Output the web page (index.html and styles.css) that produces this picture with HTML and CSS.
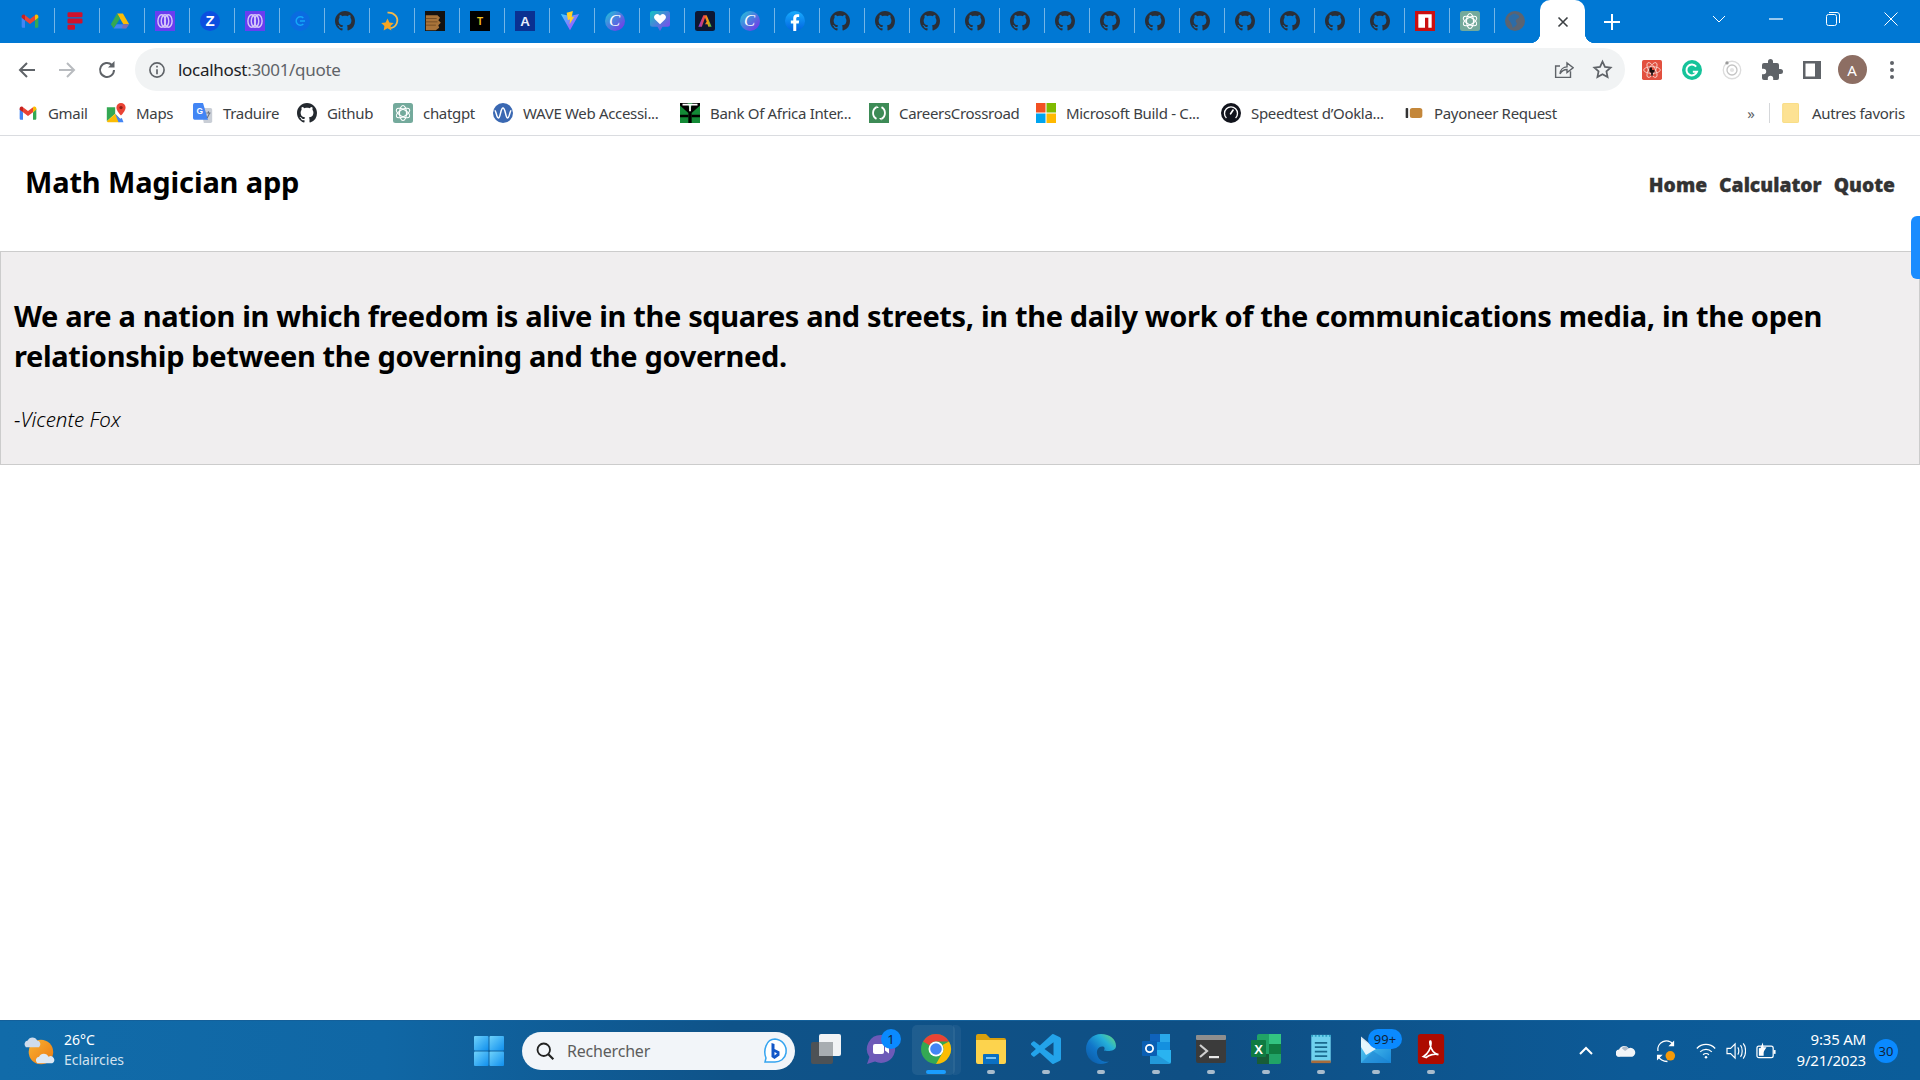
FILE: index.html
```html
<!DOCTYPE html>
<html lang="en">
<head>
<meta charset="utf-8">
<title>Math Magician app</title>
<link rel="stylesheet" href="styles.css">
</head>
<body>
<svg class="defs" aria-hidden="true">
  <defs>
    <linearGradient id="gCanva" x1="0" y1="0" x2="1" y2="1"><stop offset="0" stop-color="#1fc8d8"/><stop offset="1" stop-color="#7d2ae8"/></linearGradient>
    <linearGradient id="gHeart" x1="0" y1="0" x2="1" y2="1"><stop offset="0" stop-color="#10c4c4"/><stop offset="1" stop-color="#8a3df0"/></linearGradient>
    <linearGradient id="gVite" x1="0" y1="0" x2="1" y2="1"><stop offset="0" stop-color="#41d1ff"/><stop offset="1" stop-color="#bd34fe"/></linearGradient>
    <linearGradient id="gFb" x1="0" y1="0" x2="0" y2="1"><stop offset="0" stop-color="#18acfe"/><stop offset="1" stop-color="#0163e0"/></linearGradient>
    <linearGradient id="gAdobe" x1="0" y1="0" x2="1" y2="0"><stop offset="0" stop-color="#7c3aed"/><stop offset=".4" stop-color="#ef4444"/><stop offset=".7" stop-color="#f59e0b"/><stop offset="1" stop-color="#22c55e"/></linearGradient>
    <linearGradient id="gEdge" x1="1" y1="0" x2="0" y2="1"><stop offset="0" stop-color="#6fdc6a"/><stop offset=".3" stop-color="#25b0d8"/><stop offset=".6" stop-color="#1176c9"/><stop offset="1" stop-color="#0b57a0"/></linearGradient>
    <linearGradient id="gSun" x1="0" y1="0" x2="1" y2="1"><stop offset="0" stop-color="#f9b233"/><stop offset="1" stop-color="#ec7a12"/></linearGradient>
    <linearGradient id="gWin" x1="0" y1="0" x2="1" y2="1"><stop offset="0" stop-color="#6fd2fb"/><stop offset="1" stop-color="#0f8fee"/></linearGradient>
    <linearGradient id="gMail" x1="0" y1="0" x2="1" y2="1"><stop offset="0" stop-color="#5fd3f5"/><stop offset="1" stop-color="#1687d9"/></linearGradient>

    <symbol id="i-gmail" viewBox="0 0 24 24">
      <path fill="#4285f4" d="M2 7v11.5C2 19.3 2.7 20 3.5 20H6v-9z"/>
      <path fill="#34a853" d="M22 7v11.5c0 .8-.7 1.5-1.5 1.5H18v-9z"/>
      <path fill="#ea4335" d="M6 11l6 4.5 6-4.5V5l-6 4.5L6 5z"/>
      <path fill="#fbbc04" d="M18 5v6l4-3V6.500c0-1.900-2.200-3-3.700-1.800z"/>
      <path fill="#c5221f" d="M6 5v6L2 8V6.500c0-1.900 2.200-3 3.700-1.800z"/>
    </symbol>
    <symbol id="i-flip" viewBox="0 0 24 24">
      <rect x="3" y="1.500" width="18" height="6" rx="1.500" fill="#d0112b"/>
      <rect x="3" y="9" width="18" height="6" rx="1.500" fill="#d0112b"/>
      <rect x="3" y="16.500" width="9" height="6" rx="1.500" fill="#d0112b"/>
    </symbol>
    <symbol id="i-drive" viewBox="0 0 24 24">
      <path fill="#fbbc04" d="M8.500 3h7l7.500 13h-7z"/>
      <path fill="#34a853" d="M8.500 3 1 16l3.500 5 7.500-12z"/>
      <path fill="#4285f4" d="M4.500 21h15l3.500-5H8z"/>
      <path fill="#ea4335" d="M19.500 21 23 16h-7.500l-1 5z" opacity=".35"/>
    </symbol>
    <symbol id="i-loops" viewBox="0 0 24 24">
      <rect width="24" height="24" fill="#6a3df0"/>
      <g fill="none" stroke="#e3d8fb" stroke-width="1.700" opacity=".9">
        <ellipse cx="8" cy="12" rx="4.500" ry="7.500"/><ellipse cx="12" cy="12" rx="4.500" ry="7.500"/><ellipse cx="16" cy="12" rx="4.500" ry="7.500"/>
      </g>
    </symbol>
    <symbol id="i-z" viewBox="0 0 24 24">
      <circle cx="12" cy="12" r="12" fill="#0b4fe0"/>
      <text x="12" y="18.500" text-anchor="middle" class="svg-bold" font-size="18" fill="#fff">Z</text>
    </symbol>
    <symbol id="i-cc" viewBox="0 0 24 24">
      <circle cx="12" cy="12" r="12" fill="#0a6be0"/>
      <path fill="none" stroke="#14a8f8" stroke-width="1.800" d="M16 8.500a5 5 0 1 0 0 7M12 12h6"/>
    </symbol>
    <symbol id="i-github" viewBox="0 0 16 16">
      <path fill="currentColor" fill-rule="evenodd" d="M8 0C3.580 0 0 3.580 0 8c0 3.540 2.290 6.530 5.470 7.590.4.070.55-.17.55-.38 0-.19-.01-.82-.01-1.490-2.010.37-2.530-.49-2.690-.94-.09-.23-.48-.94-.82-1.130-.28-.15-.68-.52-.01-.53.63-.01 1.080.58 1.230.82.72 1.210 1.870.87 2.330.66.070-.52.28-.87.51-1.070-1.780-.2-3.640-.89-3.640-3.950 0-.87.31-1.590.82-2.150-.08-.2-.36-1.020.08-2.120 0 0 .67-.21 2.200.82.64-.18 1.320-.27 2-.27.68 0 1.360.09 2 .27 1.530-1.040 2.200-.82 2.200-.82.44 1.100.16 1.920.08 2.120.51.56.82 1.280.82 2.150 0 3.070-1.870 3.750-3.650 3.950.29.25.54.73.54 1.480 0 1.070-.01 1.930-.01 2.200 0 .21.15.46.55.38A8.013 8.013 0 0 0 16 8c0-4.420-3.580-8-8-8z"/>
    </symbol>
    <symbol id="i-star-swoosh" viewBox="0 0 24 24">
      <path fill="none" stroke="#f2b84b" stroke-width="2.200" d="M9 2c8-1 14 6 11 13-1.500 3.500-5 5.500-8 5.500"/>
      <path fill="#f5a623" d="M9 9l2.300 4.700 5.200.8-3.800 3.600.9 5.200L9 20.800l-4.600 2.500.9-5.200L1.500 14.500l5.200-.8z"/>
    </symbol>
    <symbol id="i-brown" viewBox="0 0 24 24">
      <rect width="24" height="24" fill="#141210"/>
      <path fill="#a9743a" d="M1 5h14l3 3-2 3 3 3-3 3 1 3-4 3H1z"/>
      <path stroke="#6e4820" stroke-width="1" d="M1 9h13M1 13h14M1 17h12"/>
    </symbol>
    <symbol id="i-t" viewBox="0 0 24 24">
      <rect width="24" height="24" fill="#000"/>
      <text x="12" y="17" text-anchor="middle" class="svg-bold" font-size="12" fill="#f0c020">T</text>
    </symbol>
    <symbol id="i-a" viewBox="0 0 24 24">
      <rect width="24" height="24" fill="#0a3191"/>
      <text x="12" y="18" text-anchor="middle" class="svg-bold" font-size="16" fill="#e8eefc">A</text>
    </symbol>
    <symbol id="i-vite" viewBox="0 0 24 24">
      <path fill="url(#gVite)" d="M1 3.500 12 23 23 3.500 16 5l-4 1-4-1z"/>
      <path fill="#ffd028" d="M15.500 0 8 2l1.500 9 2.500-1-.5 6 5.500-9-3 .5z"/>
    </symbol>
    <symbol id="i-canva" viewBox="0 0 24 24">
      <circle cx="12" cy="12" r="12" fill="url(#gCanva)"/>
      <text x="11.500" y="18.500" text-anchor="middle" class="svg-serif" font-size="20" fill="#fff">C</text>
    </symbol>
    <symbol id="i-heart" viewBox="0 0 24 24">
      <path fill="url(#gHeart)" d="M3 0h18a3 3 0 0 1 3 3v13a3 3 0 0 1-3 3h-6l-3 5-3-5H3a3 3 0 0 1-3-3V3a3 3 0 0 1 3-3z"/>
      <path fill="#fff" d="M12 16 5.800 9.800a3.700 3.700 0 0 1 5.200-5.200l1 1 1-1a3.700 3.700 0 0 1 5.200 5.200z"/>
    </symbol>
    <symbol id="i-adobe" viewBox="0 0 24 24">
      <rect width="24" height="24" rx="3" fill="#0d1733"/>
      <path fill="url(#gAdobe)" d="M10 5h4l6 14h-4l-1-3h-3l2-3.500-2-4.500-3.800 11H4z"/>
    </symbol>
    <symbol id="i-fb" viewBox="0 0 24 24">
      <circle cx="12" cy="12" r="12" fill="url(#gFb)"/>
      <path fill="#fff" d="M13.500 24v-9h3l.5-3.700h-3.500V9c0-1 .4-1.800 1.900-1.800H17V4c-.5-.1-1.500-.2-2.500-.2-2.700 0-4.600 1.600-4.600 4.700v2.800H7V15h2.900v9z"/>
    </symbol>
    <symbol id="i-npm" viewBox="0 0 24 24">
      <rect width="24" height="24" fill="#cb0f0f"/>
      <path fill="#fff" d="M4 4h16v16h-4V8h-4v12H4z"/>
    </symbol>
    <symbol id="i-gpt" viewBox="0 0 24 24">
      <rect width="24" height="24" rx="3" fill="#74aa9c"/>
      <g fill="none" stroke="#fff" stroke-width="1.300">
        <ellipse cx="12" cy="12" rx="4.200" ry="9"/>
        <ellipse cx="12" cy="12" rx="4.200" ry="9" transform="rotate(60 12 12)"/>
        <ellipse cx="12" cy="12" rx="4.200" ry="9" transform="rotate(120 12 12)"/>
      </g>
    </symbol>
    <symbol id="i-globe" viewBox="0 0 24 24">
      <circle cx="12" cy="12" r="12" fill="#5a6472"/>
      <path fill="#1f6fb8" d="M12 3c2 1 5 2 5 4s-3 2-4 4 2 3 1 5-3 4-5 4c0-3-1-4-2-6s-3-3-3-5 5-6 8-6z" opacity=".75"/>
    </symbol>

    <symbol id="i-maps" viewBox="0 0 24 24">
      <path fill="#34a853" d="M1 5l10 0v8L1 22z"/>
      <path fill="#fbbc04" d="M1 22 11 13l6 6-1 4H2z"/>
      <path fill="#4285f4" d="M11 13l6 6 2-1 2 5h-6z"/>
      <path fill="#ea4335" d="M18 0a5.500 5.500 0 0 0-5.500 5.500C12.500 10 18 15 18 15s5.500-5 5.500-9.500A5.500 5.500 0 0 0 18 0z"/>
      <circle cx="18" cy="5.500" r="2" fill="#8e1f16"/>
    </symbol>
    <symbol id="i-translate" viewBox="0 0 24 24">
      <path fill="#c9ced6" d="M9 6h12a2 2 0 0 1 2 2v14a2 2 0 0 1-2 2h-8z"/>
      <path fill="#4285f4" d="M2 0h10l6 20H2a2 2 0 0 1-2-2V2a2 2 0 0 1 2-2z"/>
      <text x="8" y="13" text-anchor="middle" class="svg-bold" font-size="10" fill="#fff">G</text>
      <path stroke="#6b7280" stroke-width="1.300" d="M16 12h5M18.500 10v2M17 18l3-6"/>
    </symbol>
    <symbol id="i-wave" viewBox="0 0 24 24">
      <circle cx="12" cy="12" r="12" fill="#3a68b2"/>
      <path fill="none" stroke="#fff" stroke-width="1.800" d="M2 9c2 0 2 9 4.500 9S9 6 12 6s3 12 5.500 12S20 9 22 9"/>
    </symbol>
    <symbol id="i-bank" viewBox="0 0 24 24">
      <rect width="24" height="24" fill="#138a36"/>
      <path fill="#000" d="M0 0h9l3 9 3-9h9v3l-10 9v12h-4V12L0 3z"/>
      <path fill="#000" d="M0 14h10v3H0zM14 14h10v3H14z"/>
      <path fill="#fff" d="M3 1h18v2h-8v7h-2V3H3z"/>
    </symbol>
    <symbol id="i-careers" viewBox="0 0 24 24">
      <rect width="24" height="24" fill="#3d8b56"/>
      <path fill="none" stroke="#fff" stroke-width="2.200" d="M9 5a8 8 0 0 0 0 14M15 5a8 8 0 0 1 0 14"/>
      <path fill="#fff" d="M9 3l3 3H9zM15 21l-3-3h3z"/>
    </symbol>
    <symbol id="i-ms" viewBox="0 0 24 24">
      <rect width="11.400" height="11.400" fill="#f25022"/>
      <rect x="12.600" width="11.400" height="11.400" fill="#7fba00"/>
      <rect y="12.600" width="11.400" height="11.400" fill="#00a4ef"/>
      <rect x="12.600" y="12.600" width="11.400" height="11.400" fill="#ffb900"/>
    </symbol>
    <symbol id="i-speed" viewBox="0 0 24 24">
      <circle cx="12" cy="12" r="12" fill="#11131c"/>
      <path fill="none" stroke="#fff" stroke-width="1.600" d="M6.500 18a7.800 7.800 0 1 1 11 0"/>
      <path stroke="#fff" stroke-width="2" stroke-linecap="round" d="M11.500 13l3-4.500"/>
    </symbol>
    <symbol id="i-payoneer" viewBox="0 0 24 24">
      <rect x="2" y="6" width="3" height="12" rx="1" fill="#333"/>
      <rect x="7" y="6" width="15" height="12" rx="3" fill="#c4873a"/>
    </symbol>
    <symbol id="i-folder" viewBox="0 0 24 24">
      <path fill="#fde293" stroke="#f7d774" d="M3 .500h17a1 1 0 0 1 1 1v21a1 1 0 0 1-1 1H3a1 1 0 0 1-1-1v-21a1 1 0 0 1 1-1z"/>
    </symbol>

    <symbol id="i-back" viewBox="0 0 24 24"><path fill="none" stroke="currentColor" stroke-width="2" d="M20 12H5M12 5l-7 7 7 7"/></symbol>
    <symbol id="i-forward" viewBox="0 0 24 24"><path fill="none" stroke="currentColor" stroke-width="2" d="M4 12h15M12 5l7 7-7 7"/></symbol>
    <symbol id="i-reload" viewBox="0 0 24 24"><path fill="none" stroke="currentColor" stroke-width="2" d="M19 12a7 7 0 1 1-2.100-5"/><path fill="currentColor" d="M19.500 3v6.500H13z"/></symbol>
    <symbol id="i-info" viewBox="0 0 24 24"><circle cx="12" cy="12" r="8.500" fill="none" stroke="currentColor" stroke-width="2"/><path fill="currentColor" d="M11 11h2v6h-2zM11 7h2v2h-2z"/></symbol>
    <symbol id="i-share" viewBox="0 0 24 24"><path fill="none" stroke="currentColor" stroke-width="1.600" d="M20 14v7H3V8h5"/><path fill="none" stroke="currentColor" stroke-width="1.600" d="M8 17c.5-5 4-8 8-8V4.500L23 10l-7 5.500V12c-3 0-6 1.500-8 5z"/></symbol>
    <symbol id="i-star" viewBox="0 0 24 24"><path fill="none" stroke="currentColor" stroke-width="2" d="M12 3l2.800 6 6.500.8-4.800 4.400 1.300 6.500L12 17.500l-5.800 3.200 1.300-6.500-4.800-4.400 6.500-.8z"/></symbol>
    <symbol id="i-ext-react" viewBox="0 0 24 24">
      <rect width="24" height="24" rx="2" fill="#e2503f"/>
      <g fill="none" stroke="#f9d5cf" stroke-width="1">
        <ellipse cx="12" cy="12" rx="10" ry="4"/><ellipse cx="12" cy="12" rx="10" ry="4" transform="rotate(60 12 12)"/><ellipse cx="12" cy="12" rx="10" ry="4" transform="rotate(120 12 12)"/>
      </g>
      <path fill="#1a1010" d="M9 9h3v3h3v3h-2v4h-2v-4H9z"/>
    </symbol>
    <symbol id="i-grammarly" viewBox="0 0 24 24">
      <circle cx="12" cy="12" r="12" fill="#15c39a"/>
      <path fill="none" stroke="#fff" stroke-width="2.400" d="M17 8a6.500 6.500 0 1 0 1 6h-5"/>
    </symbol>
    <symbol id="i-target" viewBox="0 0 24 24">
      <circle cx="12" cy="12" r="10.500" fill="none" stroke="#dcdcdc" stroke-width="1.600"/>
      <circle cx="12" cy="12" r="6" fill="none" stroke="#c4c4c4" stroke-width="1.600"/>
      <circle cx="12" cy="12" r="2.500" fill="#e3e3e3"/>
      <circle cx="6" cy="3.500" r="2" fill="#9a9a9a"/>
    </symbol>
    <symbol id="i-puzzle" viewBox="0 0 24 24"><path fill="currentColor" d="M20.500 11H19V7a2 2 0 0 0-2-2h-4V3.500a2.500 2.500 0 0 0-5 0V5H4a2 2 0 0 0-2 2v3.800h1.500a2.700 2.700 0 0 1 0 5.400H2V20a2 2 0 0 0 2 2h3.800v-1.500a2.700 2.700 0 0 1 5.400 0V22H17a2 2 0 0 0 2-2v-4h1.500a2.500 2.500 0 0 0 0-5z"/></symbol>
    <symbol id="i-panel" viewBox="0 0 24 24"><path fill="currentColor" fill-rule="evenodd" d="M3 3h18v18H3zM5.500 5.500v13H15v-13z"/></symbol>
    <symbol id="i-dots" viewBox="0 0 24 24"><circle cx="12" cy="5" r="2" fill="currentColor"/><circle cx="12" cy="12" r="2" fill="currentColor"/><circle cx="12" cy="19" r="2" fill="currentColor"/></symbol>
    <symbol id="i-close" viewBox="0 0 12 12"><path fill="none" stroke="currentColor" stroke-width="1.600" d="M1.500 1.500l9 9M10.500 1.500l-9 9"/></symbol>
    <symbol id="i-plus" viewBox="0 0 16 16"><path fill="none" stroke="currentColor" stroke-width="2" d="M8 0v16M0 8h16"/></symbol>
    <symbol id="i-chev" viewBox="0 0 14 14"><path fill="none" stroke="currentColor" stroke-width="1" d="M1 4l6 6 6-6"/></symbol>
    <symbol id="i-min" viewBox="0 0 14 14"><path stroke="currentColor" stroke-width="1.200" d="M0 7h14"/></symbol>
    <symbol id="i-restore" viewBox="0 0 14 14"><rect x=".5" y="2.500" width="10" height="11" rx="2" fill="none" stroke="currentColor"/><path fill="none" stroke="currentColor" d="M3 .5h8a2.500 2.500 0 0 1 2.500 2.500v8"/></symbol>
    <symbol id="i-x" viewBox="0 0 14 14"><path fill="none" stroke="currentColor" stroke-width="1" d="M.5.5l13 13M13.500.5l-13 13"/></symbol>

    <symbol id="i-weather" viewBox="0 0 36 36">
      <circle cx="19" cy="19" r="13" fill="url(#gSun)"/>
      <path fill="#cfdcec" d="M3 14a4 4 0 0 1 2-7 5.500 5.500 0 0 1 10 0 4 4 0 0 1 2 7z"/>
      <path fill="#dde8f4" d="M15 31a4 4 0 0 1 2-7 5.500 5.500 0 0 1 10 0 4 4 0 0 1 4 7z"/>
    </symbol>
    <symbol id="i-win" viewBox="0 0 30 30">
      <rect x="0" y="0" width="14.500" height="14.500" rx="1" fill="url(#gWin)"/>
      <rect x="15.500" y="0" width="14.500" height="14.500" rx="1" fill="url(#gWin)"/>
      <rect x="0" y="15.500" width="14.500" height="14.500" rx="1" fill="url(#gWin)"/>
      <rect x="15.500" y="15.500" width="14.500" height="14.500" rx="1" fill="url(#gWin)"/>
    </symbol>
    <symbol id="i-search" viewBox="0 0 24 24"><circle cx="10.500" cy="10.500" r="7.500" fill="none" stroke="currentColor" stroke-width="2.200"/><path stroke="currentColor" stroke-width="2.600" d="M16 16l6 6"/></symbol>
    <symbol id="i-bing" viewBox="0 0 26 26">
      <path fill="#fff" stroke="#35a4f0" stroke-width="1.500" d="M13 1a12 12 0 0 1 11 14c-1 6-6 9-11 9H3l1-4C1 13 4 1 13 1z"/>
      <path fill="#1257c7" d="M9.500 5l3 1v5l5 2.500v4L12.500 21l-3-2z"/>
      <path fill="#fff" d="M12.500 14l2.500 1.500-2.500 2z"/>
    </symbol>
    <symbol id="i-taskview" viewBox="0 0 30 30">
      <rect x="0" y="8" width="22" height="22" rx="2" fill="#4d5256"/>
      <rect x="8" y="0" width="22" height="22" rx="2" fill="#f1f3f5"/>
      <rect x="8" y="8" width="14" height="14" fill="#a8adb1"/>
    </symbol>
    <symbol id="i-teams" viewBox="0 0 30 30">
      <path fill="#6d5ab8" d="M15 1a14 14 0 1 1-6 26.600L1 30l2.400-7A14 14 0 0 1 15 1z"/>
      <rect x="7" y="10" width="11" height="10" rx="2" fill="#fff"/>
      <path fill="#fff" d="M19 13.500l4-3v9l-4-3z"/>
    </symbol>
    <symbol id="i-chrome" viewBox="0 0 32 32">
      <circle cx="16" cy="16" r="15" fill="#34a853"/>
      <path fill="#ea4335" d="M16 1a15 15 0 0 1 13 7.500H16a7.500 7.500 0 0 0-6.500 3.800L3.100 8.500A15 15 0 0 1 16 1z"/>
      <path fill="#fbbc04" d="M29 8.500A15 15 0 0 1 16 31l6.500-11.300A7.500 7.500 0 0 0 22.500 12z"/>
      <circle cx="16" cy="16" r="7.500" fill="#fff"/>
      <circle cx="16" cy="16" r="5.800" fill="#4285f4"/>
    </symbol>
    <symbol id="i-explorer" viewBox="0 0 30 30">
      <path fill="#d9a00d" d="M0 2a2 2 0 0 1 2-2h8l4 4h14a2 2 0 0 1 2 2v6H0z"/>
      <path fill="#fdd34d" d="M0 6h30v22a2 2 0 0 1-2 2H2a2 2 0 0 1-2-2z"/>
      <path fill="#0a6fc2" d="M7 30v-9a1 1 0 0 1 1-1h14a1 1 0 0 1 1 1v9z"/>
      <rect x="10" y="23" width="10" height="2" fill="#7cc5f5"/>
    </symbol>
    <symbol id="i-vscode" viewBox="0 0 24 24">
      <path fill="#23a3ea" d="M23.150 2.587L18.210.21a1.494 1.494 0 0 0-1.705.29l-9.460 8.630-4.120-3.128a.999.999 0 0 0-1.276.057L.327 7.261A1 1 0 0 0 .326 8.740L3.899 12 .326 15.260a1 1 0 0 0 .001 1.479L1.650 17.940a.999.999 0 0 0 1.276.057l4.120-3.128 9.460 8.630a1.492 1.492 0 0 0 1.704.29l4.942-2.377A1.500 1.500 0 0 0 24 20.060V3.939a1.500 1.500 0 0 0-.85-1.352zm-5.146 14.861L10.826 12l7.178-5.448v10.896z"/>
    </symbol>
    <symbol id="i-edge" viewBox="0 0 30 30">
      <path fill="url(#gEdge)" d="M15 0C6.700 0 0 6.700 0 15s6.700 15 15 15c3 0 6-1 8-2.500-5 1-11-1-12-8-.6-4 2-7 5-7 3 0 3 2 2 4 3 1 12 1 12-4.500C30 5 24 0 15 0z"/>
    </symbol>
    <symbol id="i-outlook" viewBox="0 0 30 30">
      <rect x="9" y="0" width="20" height="15" fill="#0f62bb"/>
      <rect x="19" y="0" width="10" height="8" fill="#29a8ea"/>
      <rect x="9" y="8" width="20" height="8" fill="#1490df"/>
      <path fill="#2ab3f0" d="M9 16h21v12a2 2 0 0 1-2 2H9z"/>
      <path fill="#0f5ea8" d="M9 16l21 14H9z" opacity=".3"/>
      <rect x="1" y="7" width="15" height="15" rx="1" fill="#0a5fb4"/>
      <circle cx="8.500" cy="14.500" r="3.600" fill="none" stroke="#fff" stroke-width="1.800"/>
    </symbol>
    <symbol id="i-terminal" viewBox="0 0 30 28">
      <rect width="30" height="28" rx="2" fill="#3b3b3b"/>
      <rect width="30" height="5" rx="1" fill="#8e8e8e"/>
      <path fill="none" stroke="#cfcfcf" stroke-width="2.200" d="M4 10l7 6-7 6"/>
      <rect x="13" y="21" width="10" height="2.200" fill="#e8e8e8"/>
    </symbol>
    <symbol id="i-excel" viewBox="0 0 30 30">
      <rect x="6" y="0" width="24" height="30" rx="2" fill="#21a366"/>
      <rect x="18" y="0" width="12" height="10" fill="#33c481"/>
      <rect x="6" y="20" width="12" height="10" fill="#185c37"/>
      <rect x="18" y="10" width="12" height="10" fill="#107c41"/>
      <rect x="0" y="6" width="15" height="17" rx="1" fill="#0f7b42"/>
      <text x="7.500" y="19.500" text-anchor="middle" class="svg-bold" font-size="13" fill="#fff">X</text>
    </symbol>
    <symbol id="i-notepad" viewBox="0 0 24 34">
      <rect x="1" y="1" width="22" height="31" fill="#6fd1ee"/>
      <rect x="1" y="30" width="22" height="3" fill="#a86c3c"/>
      <path stroke="#1a6a8e" stroke-width="2" d="M5 10h14M5 15h14M5 20h14M5 25h14"/>
      <path stroke="#2aa0c4" stroke-width="2" stroke-dasharray="2 2" d="M1 2h22"/>
    </symbol>
    <symbol id="i-mail" viewBox="0 0 30 28">
      <path fill="url(#gMail)" d="M0 4l15 10L30 0v28H0z"/>
      <path fill="#fff" d="M0 1.500 15 14 5 20 0 12z" opacity=".85"/>
      <path fill="#1c7fd0" d="M0 28l12-12 18 12z" opacity=".5"/>
    </symbol>
    <symbol id="i-acrobat" viewBox="0 0 28 32">
      <rect width="28" height="32" rx="3" fill="#ad0b00"/>
      <path fill="none" stroke="#fff" stroke-width="1.800" d="M6 24c5-3 8-9 8-14 0-4-2-3-1 1 1 5 4 10 9 11-4-1-10 0-13 3z"/>
    </symbol>
    <symbol id="i-caret" viewBox="0 0 14 10"><path fill="none" stroke="currentColor" stroke-width="2" d="M1 8l6-6 6 6"/></symbol>
    <symbol id="i-cloud" viewBox="0 0 22 14">
      <path fill="#f2f5f8" d="M4 14a4 4 0 0 1-.6-8A6 6 0 0 1 14 4.500 4.800 4.800 0 0 1 18 14z"/>
      <path fill="#aebccb" d="M8 3a6 6 0 0 1 6 1.500l-4 3-3.600-3z"/>
    </symbol>
    <symbol id="i-sync" viewBox="0 0 22 24">
      <path fill="none" stroke="#fff" stroke-width="1.400" d="M2 12A9 9 0 0 1 18 5M2 17c2 4 6 6 10 6"/>
      <path fill="#fff" d="M19 1v6h-6zM1 22v-6h6z"/>
      <circle cx="15" cy="17" r="5" fill="#f59a0a"/>
    </symbol>
    <symbol id="i-wifi" viewBox="0 0 24 18"><g fill="none" stroke="#fff" stroke-width="1.500"><path d="M1 6a15 15 0 0 1 22 0"/><path d="M5 10a10 10 0 0 1 14 0"/><path d="M8.500 13.500a5 5 0 0 1 7 0"/></g><circle cx="12" cy="16.500" r="1.500" fill="#fff"/></symbol>
    <symbol id="i-vol" viewBox="0 0 22 20"><g fill="none" stroke="#fff" stroke-width="1.300"><path d="M1 7v6h4l5 5V2L5 7z"/><path d="M13 6c1.500 2 1.500 6 0 8"/><path d="M16 3.500c2.500 3 2.500 10 0 13"/><path d="M19 1.500c3.500 4 3.500 13 0 17"/></g></symbol>
    <symbol id="i-batt" viewBox="0 0 22 18"><rect x="1" y="4" width="17" height="12" rx="2" fill="none" stroke="#fff" stroke-width="1.300"/><rect x="18.500" y="8" width="2" height="4" fill="#fff"/><path fill="#fff" d="M3 6h5v8H3z"/><path fill="#fff" d="M7 0 4 8h3l-1 5 5-8H8z"/></symbol>
  </defs>
</svg>

<header class="tabstrip">
  <div class="tab"><svg class="fav"><use href="#i-gmail"/></svg></div>
  <div class="tab"><svg class="fav"><use href="#i-flip"/></svg></div>
  <div class="tab"><svg class="fav"><use href="#i-drive"/></svg></div>
  <div class="tab"><svg class="fav"><use href="#i-loops"/></svg></div>
  <div class="tab"><svg class="fav"><use href="#i-z"/></svg></div>
  <div class="tab"><svg class="fav"><use href="#i-loops"/></svg></div>
  <div class="tab"><svg class="fav"><use href="#i-cc"/></svg></div>
  <div class="tab"><svg class="fav gh"><use href="#i-github"/></svg></div>
  <div class="tab"><svg class="fav"><use href="#i-star-swoosh"/></svg></div>
  <div class="tab"><svg class="fav"><use href="#i-brown"/></svg></div>
  <div class="tab"><svg class="fav"><use href="#i-t"/></svg></div>
  <div class="tab"><svg class="fav"><use href="#i-a"/></svg></div>
  <div class="tab"><svg class="fav"><use href="#i-vite"/></svg></div>
  <div class="tab"><svg class="fav"><use href="#i-canva"/></svg></div>
  <div class="tab"><svg class="fav"><use href="#i-heart"/></svg></div>
  <div class="tab"><svg class="fav"><use href="#i-adobe"/></svg></div>
  <div class="tab"><svg class="fav"><use href="#i-canva"/></svg></div>
  <div class="tab"><svg class="fav"><use href="#i-fb"/></svg></div>
  <div class="tab"><svg class="fav gh"><use href="#i-github"/></svg></div>
  <div class="tab"><svg class="fav gh"><use href="#i-github"/></svg></div>
  <div class="tab"><svg class="fav gh"><use href="#i-github"/></svg></div>
  <div class="tab"><svg class="fav gh"><use href="#i-github"/></svg></div>
  <div class="tab"><svg class="fav gh"><use href="#i-github"/></svg></div>
  <div class="tab"><svg class="fav gh"><use href="#i-github"/></svg></div>
  <div class="tab"><svg class="fav gh"><use href="#i-github"/></svg></div>
  <div class="tab"><svg class="fav gh"><use href="#i-github"/></svg></div>
  <div class="tab"><svg class="fav gh"><use href="#i-github"/></svg></div>
  <div class="tab"><svg class="fav gh"><use href="#i-github"/></svg></div>
  <div class="tab"><svg class="fav gh"><use href="#i-github"/></svg></div>
  <div class="tab"><svg class="fav gh"><use href="#i-github"/></svg></div>
  <div class="tab"><svg class="fav gh"><use href="#i-github"/></svg></div>
  <div class="tab"><svg class="fav"><use href="#i-npm"/></svg></div>
  <div class="tab"><svg class="fav"><use href="#i-gpt"/></svg></div>
  <div class="tab tab-last"><svg class="fav"><use href="#i-globe"/></svg></div>
  <div class="tab-active"><svg class="tab-close"><use href="#i-close"/></svg></div>
  <svg class="new-tab"><use href="#i-plus"/></svg>
  <div class="win-controls">
    <svg class="win-ico win-chev"><use href="#i-chev"/></svg>
    <svg class="win-ico win-min"><use href="#i-min"/></svg>
    <svg class="win-ico win-res"><use href="#i-restore"/></svg>
    <svg class="win-ico win-x"><use href="#i-x"/></svg>
  </div>
</header>

<div class="toolbar">
  <div class="tool"><svg class="tool-ico"><use href="#i-back"/></svg></div>
  <div class="tool tool-off"><svg class="tool-ico"><use href="#i-forward"/></svg></div>
  <div class="tool"><svg class="tool-ico"><use href="#i-reload"/></svg></div>
  <div class="omnibox">
    <svg class="omni-info"><use href="#i-info"/></svg>
    <span class="url"><span class="url-host">localhost</span>:3001/quote</span>
    <svg class="omni-act omni-share"><use href="#i-share"/></svg>
    <svg class="omni-act"><use href="#i-star"/></svg>
  </div>
  <div class="exts">
    <div class="tool"><svg class="ext-ico"><use href="#i-ext-react"/></svg></div>
    <div class="tool"><svg class="ext-ico"><use href="#i-grammarly"/></svg></div>
    <div class="tool"><svg class="ext-ico"><use href="#i-target"/></svg></div>
    <div class="tool"><svg class="tool-ico"><use href="#i-puzzle"/></svg></div>
    <div class="tool"><svg class="tool-ico"><use href="#i-panel"/></svg></div>
    <div class="tool"><span class="avatar">A</span></div>
    <div class="tool"><svg class="tool-ico"><use href="#i-dots"/></svg></div>
  </div>
</div>

<nav class="bookmarks">
  <div class="bm"><svg class="bm-ico"><use href="#i-gmail"/></svg><span>Gmail</span></div>
  <div class="bm"><svg class="bm-ico"><use href="#i-maps"/></svg><span>Maps</span></div>
  <div class="bm"><svg class="bm-ico"><use href="#i-translate"/></svg><span>Traduire</span></div>
  <div class="bm"><svg class="bm-ico bm-gh"><use href="#i-github"/></svg><span>Github</span></div>
  <div class="bm"><svg class="bm-ico"><use href="#i-gpt"/></svg><span>chatgpt</span></div>
  <div class="bm"><svg class="bm-ico"><use href="#i-wave"/></svg><span>WAVE Web Accessi...</span></div>
  <div class="bm"><svg class="bm-ico"><use href="#i-bank"/></svg><span>Bank Of Africa Inter...</span></div>
  <div class="bm"><svg class="bm-ico"><use href="#i-careers"/></svg><span>CareersCrossroad</span></div>
  <div class="bm"><svg class="bm-ico"><use href="#i-ms"/></svg><span>Microsoft Build - C...</span></div>
  <div class="bm"><svg class="bm-ico"><use href="#i-speed"/></svg><span>Speedtest d’Ookla...</span></div>
  <div class="bm"><svg class="bm-ico"><use href="#i-payoneer"/></svg><span>Payoneer Request</span></div>
  <div class="bm-more">»</div>
  <div class="bm-sep"></div>
  <div class="bm bm-other"><svg class="bm-ico"><use href="#i-folder"/></svg><span>Autres favoris</span></div>
</nav>

<main class="page">
  <div class="app-head">
    <h1 class="app-title">Math Magician app</h1>
    <ul class="app-nav">
      <li>Home</li>
      <li>Calculator</li>
      <li>Quote</li>
    </ul>
  </div>
  <section class="quote">
    <h2 class="quote-text">We are a nation in which freedom is alive in the squares and streets, in the daily work of the communications media, in the open relationship between the governing and the governed.</h2>
    <p class="quote-author">-Vicente Fox</p>
  </section>
  <div class="side-tab"></div>
</main>

<footer class="taskbar">
  <div class="weather">
    <svg class="weather-ico"><use href="#i-weather"/></svg>
    <div class="weather-text"><div>26°C</div><div class="weather-sub">Eclaircies</div></div>
  </div>
  <div class="start"><svg class="start-ico"><use href="#i-win"/></svg></div>
  <div class="search">
    <svg class="search-ico"><use href="#i-search"/></svg>
    <span class="search-text">Rechercher</span>
    <svg class="bing-ico"><use href="#i-bing"/></svg>
  </div>
  <div class="apps">
    <div class="app"><svg class="app-ico"><use href="#i-taskview"/></svg></div>
    <div class="app"><svg class="app-ico"><use href="#i-teams"/></svg><span class="badge badge-round">1</span></div>
    <div class="app app-active"><span class="app-stack"></span><svg class="app-ico app-chrome"><use href="#i-chrome"/></svg><span class="pill pill-active"></span></div>
    <div class="app"><svg class="app-ico"><use href="#i-explorer"/></svg><span class="pill"></span></div>
    <div class="app"><svg class="app-ico"><use href="#i-vscode"/></svg><span class="pill"></span></div>
    <div class="app"><svg class="app-ico"><use href="#i-edge"/></svg><span class="pill"></span></div>
    <div class="app"><svg class="app-ico"><use href="#i-outlook"/></svg><span class="pill"></span></div>
    <div class="app"><svg class="app-ico"><use href="#i-terminal"/></svg><span class="pill"></span></div>
    <div class="app"><svg class="app-ico"><use href="#i-excel"/></svg><span class="pill"></span></div>
    <div class="app"><svg class="app-ico"><use href="#i-notepad"/></svg><span class="pill"></span></div>
    <div class="app"><svg class="app-ico"><use href="#i-mail"/></svg><span class="badge badge-wide">99+</span><span class="pill"></span></div>
    <div class="app"><svg class="app-ico"><use href="#i-acrobat"/></svg><span class="pill"></span></div>
  </div>
  <div class="tray">
    <div class="tray-item"><svg class="tray-caret"><use href="#i-caret"/></svg></div>
    <div class="tray-item"><svg class="tray-cloud"><use href="#i-cloud"/></svg></div>
    <div class="tray-item"><svg class="tray-sync"><use href="#i-sync"/></svg></div>
    <div class="tray-item tray-narrow tray-wifi-item"><svg class="tray-wifi"><use href="#i-wifi"/></svg></div>
    <div class="tray-item tray-narrow"><svg class="tray-vol"><use href="#i-vol"/></svg></div>
    <div class="tray-item tray-narrow"><svg class="tray-batt"><use href="#i-batt"/></svg></div>
    <div class="clock"><div>9:35 AM</div><div>9/21/2023</div></div>
    <span class="notif">30</span>
  </div>
</footer>
</body>
</html>
```

FILE: styles.css
```css
* { box-sizing: border-box; }
html, body { height: 100%; margin: 0; overflow: hidden; }
body {
  display: flex;
  flex-direction: column;
  background: #fff;
  font-family: "Noto Sans", "Open Sans", sans-serif;
  color: #000;
}
.defs { position: absolute; width: 0; height: 0; }
.svg-bold { font-family: "Liberation Sans", sans-serif; font-weight: 700; }
.svg-serif { font-family: "Liberation Serif", serif; font-style: italic; }

/* Tab strip */
.tabstrip {
  display: flex;
  align-items: center;
  flex: 0 0 43px;
  height: 43px;
  padding-left: 10px;
  background: #0078d4;
  color: #fff;
}
.tab {
  display: flex;
  align-items: center;
  width: 45px;
  height: 25px;
  margin-top: -2px;
  padding-left: 10px;
  border-right: 1px solid rgba(255, 255, 255, .45);
}
.tab-last { border-right: 0; }
.fav { width: 20px; height: 20px; flex: none; }
.gh { color: #2a2f38; }
.tab-active {
  position: relative;
  display: flex;
  align-items: center;
  justify-content: center;
  width: 45px;
  height: 43px;
  background: #fff;
  border-radius: 10px 10px 0 0;
  color: #3c4043;
}
.tab-active::before, .tab-active::after {
  content: "";
  position: absolute;
  bottom: 0;
  width: 10px;
  height: 10px;
}
.tab-active::before { left: -10px; background: radial-gradient(circle at 0 0, transparent 10px, #fff 10.500px); }
.tab-active::after { right: -10px; background: radial-gradient(circle at 100% 0, transparent 10px, #fff 10.500px); }
.tab-close { width: 12px; height: 12px; margin-top: 1px; }
.new-tab { width: 16px; height: 16px; margin-left: 19px; flex: none; }
.win-controls { display: flex; align-items: center; margin-left: auto; height: 100%; padding-right: 22px; color: #fff; }
.win-ico { width: 14px; height: 14px; flex: none; margin-top: -5px; }
.win-chev { margin-right: 43px; }
.win-min { margin-right: 43px; }
.win-res { margin-right: 44px; }

/* Toolbar */
.toolbar {
  display: flex;
  align-items: center;
  flex: 0 0 48px;
  padding: 5px 0 0 7px;
  background: #fff;
}
.tool {
  display: flex;
  align-items: center;
  justify-content: center;
  width: 40px;
  height: 43px;
  flex: none;
  color: #5f6368;
}
.tool-off { color: #b8bbbf; }
.tool-ico { width: 24px; height: 24px; }
.ext-ico { width: 20px; height: 20px; }
.omnibox {
  display: flex;
  align-items: center;
  width: 1490px;
  height: 43px;
  margin-left: 8px;
  padding-left: 12px;
  background: #f1f3f4;
  border-radius: 22px;
  color: #5f6368;
  flex: none;
}
.omni-info { width: 20px; height: 20px; flex: none; }
.url { margin-left: 11px; font-size: 17px; letter-spacing: -.3px; color: #5f6368; }
.url-host { color: #202124; }
.omni-act { width: 21px; height: 21px; flex: none; margin-right: 12px; }
.omni-share { margin-left: auto; margin-right: 18px; }
.exts { display: flex; margin-left: 7px; }
.avatar {
  display: flex;
  align-items: center;
  justify-content: center;
  width: 29px;
  height: 29px;
  border-radius: 50%;
  background: #8d6e63;
  color: #fff;
  font-size: 15px;
}

/* Bookmarks */
.bookmarks {
  display: grid;
  grid-template-columns: 88px 87px 104px 96px 100px 187px 189px 167px 185px 183px 340px 14px 23px 1fr;
  align-items: center;
  flex: 0 0 45px;
  padding: 0 0 1px 18px;
  background: #fff;
  border-bottom: 1px solid #dadce0;
  font-size: 15px;
  letter-spacing: -.32px;
  color: #3c4043;
  white-space: nowrap;
}
.bm { display: flex; align-items: center; gap: 10px; }
.bm-ico { width: 20px; height: 20px; flex: none; }
.bm-gh { color: #24292f; }
.bm-more { text-align: center; font-size: 15px; color: #5f6368; }
.bm-sep { width: 1px; height: 20px; margin-left: 11px; background: #d5d7da; }
.bm-other { gap: 11px; }

/* Page */
.page { position: relative; flex: 1; min-height: 0; background: #fff; }
.app-head {
  display: flex;
  justify-content: space-between;
  height: 115px;
  padding: 26px 25px 0 25px;
}
.app-title { margin: 0; font-size: 29px; line-height: 40px; font-weight: 700; letter-spacing: -.15px; }
.app-nav {
  display: flex;
  gap: 12px;
  margin: 3px 0 0;
  padding: 0;
  list-style: none;
  font-family: "Open Sans", sans-serif;
  font-size: 19.300px;
  font-weight: 800;
  line-height: 40px;
  color: #333;
  -webkit-text-stroke: .3px #333;
}
.quote {
  height: 214px;
  padding: 44px 13px 0;
  background: #f0eeef;
  border: 1px solid #ccc;
}
.quote-text { margin: 0; font-size: 29px; line-height: 40px; font-weight: 700; letter-spacing: -.35px; }
.quote-author { margin: 29px 0 0; font-size: 20.500px; line-height: 28px; font-style: italic; font-weight: 300; }
.side-tab {
  position: absolute;
  top: 80px;
  right: 0;
  width: 9px;
  height: 63px;
  background: #1a8cff;
  border-radius: 6px 0 0 6px;
}

/* Taskbar */
.taskbar {
  display: flex;
  align-items: center;
  flex: 0 0 60px;
  background: linear-gradient(90deg, #116ba9 0%, #1067a5 20%, #0f5389 38%, #0f4f84 62%, #0c5a97 85%, #0b5d9a 100%);
  border-top: 1px solid #14609a;
  color: #fff;
  font-size: 14px;
}
.weather { display: flex; align-items: center; width: 461px; padding-left: 23px; flex: none; }
.weather-ico { width: 34px; height: 36px; flex: none; }
.weather-text { margin: -2px 0 0 7px; line-height: 20px; }
.weather-sub { color: #d3e2ef; }
.start { display: flex; justify-content: center; width: 56px; flex: none; }
.start-ico { width: 30px; height: 30px; }
.search {
  display: flex;
  align-items: center;
  width: 273px;
  height: 38px;
  margin-left: 5px;
  padding: 0 7px 0 13px;
  background: #f2f5f9;
  border-radius: 19px;
  color: #222;
  flex: none;
}
.search-ico { width: 20px; height: 20px; flex: none; }
.search-text { margin-left: 12px; font-size: 16px; color: #5d5d5d; letter-spacing: -.2px; }
.bing-ico { width: 26px; height: 26px; margin-left: auto; flex: none; }
.apps { display: flex; margin-left: 3px; flex: none; }
.app {
  position: relative;
  display: flex;
  align-items: center;
  justify-content: center;
  width: 55px;
  height: 59px;
}
.app-ico { width: 30px; height: 30px; margin-top: -3px; }
.app-chrome { width: 32px; height: 32px; position: relative; }
.app-active::before {
  content: "";
  position: absolute;
  left: 4px;
  top: 4px;
  width: 43px;
  height: 50px;
  background: rgba(255, 255, 255, .07);
  border-radius: 5px;
}
.app-stack {
  position: absolute;
  left: 45px;
  top: 4px;
  width: 8px;
  height: 50px;
  background: rgba(255, 255, 255, .05);
  border-radius: 0 5px 5px 0;
}
.pill {
  position: absolute;
  left: 24px;
  bottom: 6px;
  width: 8px;
  height: 4px;
  border-radius: 2px;
  background: #a8bccd;
}
.pill-active { left: 18px; width: 20px; background: #1a9dff; }
.badge {
  position: absolute;
  display: flex;
  align-items: center;
  justify-content: center;
  background: #0a8aff;
  color: #10243a;
  font-size: 13px;
}
.badge-round { top: 8px; left: 28px; width: 20px; height: 20px; border-radius: 50%; }
.badge-wide { top: 8px; left: 20px; width: 34px; height: 20px; border-radius: 10px; }
.tray { display: flex; align-items: center; margin-left: auto; padding-right: 22px; flex: none; }
.tray-item { display: flex; align-items: center; justify-content: center; width: 40px; height: 40px; }
.tray-narrow { width: 30px; }
.tray-wifi-item { margin-left: 5px; }
.tray-caret { width: 14px; height: 10px; }
.tray-cloud { width: 20px; height: 13px; }
.tray-sync { width: 21px; height: 24px; }
.tray-wifi { width: 20px; height: 16px; }
.tray-vol { width: 20px; height: 18px; }
.tray-batt { width: 21px; height: 18px; }
.clock { margin: -2px 0 0 -1px; width: 86px; text-align: right; font-size: 15px; line-height: 21px; letter-spacing: -.2px; }
.notif {
  display: flex;
  align-items: center;
  justify-content: center;
  width: 24px;
  height: 24px;
  margin-left: 8px;
  border-radius: 50%;
  background: #0a8aff;
  color: #10243a;
  font-size: 13px;
}
```
